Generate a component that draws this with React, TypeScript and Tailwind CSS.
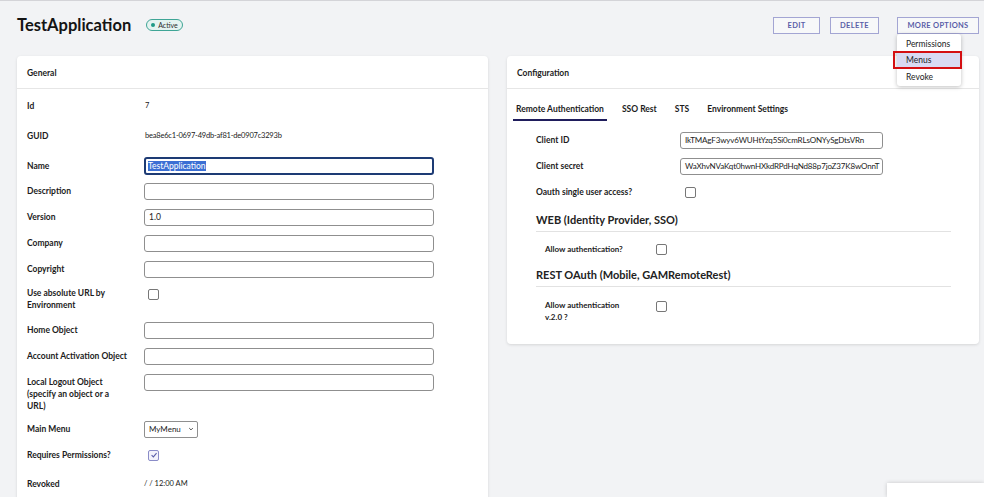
import type { ReactNode } from 'react';

const font = { fontFamily: 'Lato, "Noto Sans", sans-serif' };

function Field({ value, className = '' }: { value?: string; className?: string }) {
    return (
        <div
            className={`h-[17px] rounded-[3px] border border-[#8f8f8f] bg-white px-[4px] text-[8.5px] leading-[15px] text-[#222] whitespace-nowrap overflow-hidden ${className}`}
        >
            {value}
        </div>
    );
}

function Check({ checked = false }: { checked?: boolean }) {
    return (
        <div
            className={`flex h-[11px] w-[11px] items-center justify-center rounded-[2px] border ${
                checked ? 'border-[#8a8cc8] bg-[#f3f3fb]' : 'border-[#777] bg-white'
            }`}
        >
            {checked && (
                <svg viewBox="0 0 10 10" className="h-[8px] w-[8px]">
                    <path d="M2 5.2 L4.2 7.4 L8.2 2.6" fill="none" stroke="#5a5ea8" strokeWidth="1.3" />
                </svg>
            )}
        </div>
    );
}

function Row({ label, h, children, labelPt = 0, center = true }: { label: ReactNode; h: string; children?: ReactNode; labelPt?: number; center?: boolean }) {
    return (
        <div className={`flex ${center ? 'items-center' : 'items-start'} ${h}`}>
            <div
                className="w-[117px] shrink-0 text-[8.5px] font-bold leading-[12px] text-[#1c1c1c] whitespace-nowrap"
                style={{ paddingTop: labelPt }}
            >
                {label}
            </div>
            <div className="flex-1">{children}</div>
        </div>
    );
}

function Card({ title, children, className = '' }: { title: string; children: ReactNode; className?: string }) {
    return (
        <div className={`rounded-[4px] bg-white shadow-[0_1px_3px_rgba(0,0,0,0.12)] ${className}`}>
            <div className="flex h-[33px] items-end border-b border-[#e6e6e6] px-[10px] pb-[8px] text-[8.5px] font-bold text-[#1c1c1c]">
                {title}
            </div>
            {children}
        </div>
    );
}

export default function App() {
    return (
        <div className="relative h-[497px] w-[984px] overflow-hidden border-t border-[#d4d4d8] bg-[#f2f3f5]" style={font}>
            {/* header */}
            <div className="flex h-[55px] items-start pl-[17px] pr-[5px]">
                <div className="flex items-center pt-[13px]">
                    <h1 className="text-[16.5px] font-bold leading-[22px] text-[#141414]">TestApplication</h1>
                    <span className="ml-[15px] flex h-[12px] items-center gap-[3px] rounded-full border border-[#3fa596] bg-[#e4f3f0] px-[4px] text-[7px] leading-none text-[#2c2c2c]">
                        <span className="h-[4px] w-[4px] rounded-full bg-[#1f9a86]" />
                        Active
                    </span>
                </div>
                <div className="ml-auto flex items-center pt-[16px] text-[7.5px] font-bold tracking-[0.3px] text-[#5a5ea8]">
                    <button className="h-[17px] w-[47px] border border-[#a3a5d3] bg-white/40">EDIT</button>
                    <button className="ml-[10px] h-[17px] w-[49px] border border-[#a3a5d3] bg-white/40">DELETE</button>
                    <div className="relative ml-[18px]">
                        <button className="h-[17px] w-[82px] border border-[#a3a5d3] bg-white/40">MORE OPTIONS</button>
                        <div className="absolute left-0 top-[17px] z-10 w-[64px] rounded-[3px] bg-white pb-[1px] pt-[2px] text-[8.5px] font-normal tracking-normal text-[#222] shadow-[0_1px_4px_rgba(0,0,0,0.25)]">
                            <div className="flex h-[16px] items-center px-[9px] pt-[1px]">Permissions</div>
                            <div className="relative flex h-[16px] items-center bg-[#d9daf2] px-[9px] pt-[1px]">
                                Menus
                                <div className="absolute -left-[4px] -right-[1px] -top-[1px] -bottom-[1px] border-2 border-[#d40f12]" />
                            </div>
                            <div className="flex h-[17px] items-center px-[9px] pt-[1px]">Revoke</div>
                        </div>
                    </div>
                </div>
            </div>

            {/* cards */}
            <div className="grid grid-cols-[471px_472px] items-start gap-[19px] pl-[17px] pr-[5px]">
                <Card title="General" className="h-[460px]">
                    <div className="px-[10px] pt-[2px] text-[7.5px] text-[#222]">
                        <Row label="Id" h="h-[30px]">
                            <span className="pl-[1px]">7</span>
                        </Row>
                        <Row label="GUID" h="h-[30px]">
                            <span className="pl-[1px] tracking-[-0.2px]">bea8e6c1-0697-49db-af81-de0907c3293b</span>
                        </Row>
                        <div className="h-[2px]" />
                        <Row label="Name" h="h-[26px]">
                            <div className="h-[18px] w-[290px] rounded-[3px] border-2 border-[#1d3b74] bg-white px-[2px] text-[8.5px] leading-[14px]">
                                <span className="bg-[#3b6fd4] text-white">TestApplication</span>
                            </div>
                        </Row>
                        <div className="-mt-[1px]" />
                        <Row label="Description" h="h-[26px]">
                            <Field className="w-[290px]" />
                        </Row>
                        <Row label="Version" h="h-[26px]">
                            <Field className="w-[290px]" value="1.0" />
                        </Row>
                        <Row label="Company" h="h-[26px]">
                            <Field className="w-[290px]" />
                        </Row>
                        <Row label="Copyright" h="h-[26px]">
                            <Field className="w-[290px]" />
                        </Row>
                        <Row label={<>Use absolute URL by<br />Environment</>} h="h-[35px]" center={false} labelPt={5}>
                            <div className="pl-[4px] pt-[7px]">
                                <Check />
                            </div>
                        </Row>
                        <Row label="Home Object" h="h-[26px]">
                            <Field className="w-[290px]" />
                        </Row>
                        <Row label="Account Activation Object" h="h-[26px]">
                            <Field className="w-[290px]" />
                        </Row>
                        <Row label={<>Local Logout Object<br />(specify an object or a<br />URL)</>} h="h-[47px]" center={false} labelPt={7}>
                            <div className="pt-[5px]">
                                <Field className="w-[290px]" />
                            </div>
                        </Row>
                        <Row label="Main Menu" h="h-[26px]">
                            <div className="flex h-[17px] w-[54px] items-center justify-between rounded-[2px] border border-[#8f8f8f] bg-white pl-[4px] pr-[3px] text-[8px]">
                                MyMenu
                                <svg viewBox="0 0 10 10" className="h-[6px] w-[6px]">
                                    <path d="M2 3.5 L5 6.5 L8 3.5" fill="none" stroke="#333" strokeWidth="1.4" />
                                </svg>
                            </div>
                        </Row>
                        <Row label="Requires Permissions?" h="h-[26px]">
                            <div className="pl-[4px]">
                                <Check checked />
                            </div>
                        </Row>
                        <Row label="Revoked" h="h-[32px]">
                            <span>/ / 12:00 AM</span>
                        </Row>
                    </div>
                </Card>

                <Card title="Configuration" className="h-[288px]">
                    <div className="px-[6px]">
                        <div className="flex h-[32px] items-end gap-[12px] text-[8.5px] font-bold text-[#1c1c1c]">
                            <div className="border-b-2 border-[#1f1d5c] px-[3px] pb-[3px]">Remote Authentication</div>
                            <div className="px-[3px] pb-[5px]">SSO Rest</div>
                            <div className="px-[3px] pb-[5px]">STS</div>
                            <div className="px-[3px] pb-[5px]">Environment Settings</div>
                        </div>
                        <div className="pl-[23px] pr-[22px] pt-[6px]">
                            <div className="flex h-[26px] items-center">
                                <div className="w-[144px] text-[8.5px] font-bold text-[#1c1c1c]">Client ID</div>
                                <Field className="w-[203px] text-[8px] tracking-[-0.15px]" value="IkTMAgF3wyv6WUHtYzq5Si0cmRLsONYySgDtsVRn" />
                            </div>
                            <div className="flex h-[26px] items-center">
                                <div className="w-[144px] text-[8.5px] font-bold text-[#1c1c1c]">Client secret</div>
                                <Field className="w-[203px] text-[8px] tracking-[-0.15px]" value="WaXhvNVaKqt0hwnHXkdRPdHqNd88p7joZ37K8wOnnT" />
                            </div>
                            <div className="flex h-[26px] items-center">
                                <div className="w-[149px] text-[8.5px] font-bold text-[#1c1c1c]">Oauth single user access?</div>
                                <Check />
                            </div>

                            <div className="mt-[7px] border-b border-[#e2e2e2] pb-[3px] text-[11px] font-bold leading-[16px] text-[#222]">
                                WEB (Identity Provider, SSO)
                            </div>
                            <div className="flex h-[34px] items-center pl-[9px]">
                                <div className="w-[111px] text-[8px] font-bold text-[#1c1c1c]">Allow authentication?</div>
                                <Check />
                            </div>
                            <div className="mt-[1px] border-b border-[#e2e2e2] pb-[3px] text-[11px] font-bold leading-[16px] text-[#222]">
                                REST OAuth (Mobile, GAMRemoteRest)
                            </div>
                            <div className="flex items-start pl-[9px] pt-[12px]">
                                <div className="w-[111px] text-[8px] font-bold leading-[12px] text-[#1c1c1c]">
                                    Allow authentication
                                    <br />
                                    v.2.0 ?
                                </div>
                                <div className="pt-[2px]">
                                    <Check />
                                </div>
                            </div>
                        </div>
                    </div>
                </Card>
            </div>

            {/* toast stub bottom right */}
            <div className="absolute bottom-0 right-0 h-[14px] w-[97px] bg-white shadow-[0_0_4px_rgba(0,0,0,0.18)]" />
        </div>
    );
}
